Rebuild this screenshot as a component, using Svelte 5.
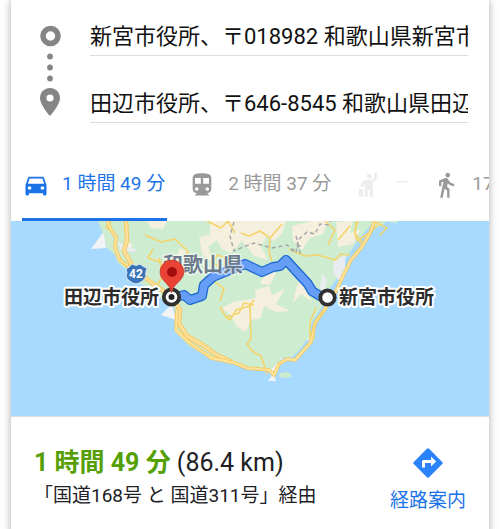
<script>
  let origin = $state('新宮市役所、〒018982 和歌山県新宮市春日');
  let destination = $state('田辺市役所、〒646-8545 和歌山県田辺市新屋敷町');
  let selected = $state('car');

  const modes = [
    { id: 'car', name: '車', time: '1 時間 49 分' },
    { id: 'train', name: '公共交通機関', time: '2 時間 37 分' },
    { id: 'ride', name: '配車サービス', time: '—', off: true },
    { id: 'walk', name: '徒歩', time: '17 時間' }
  ];

  const route =
    'M176 297L184 295 190 300 202 296 204 285 213 277 230 270 245 264 262 272 273 267 280 266 286 260 308 284 312 291 320 296';
</script>

<main class="card">
  <form class="places">
    <svg class="trail" viewBox="0 0 24 96" width="24" height="96" aria-hidden="true">
      <circle cx="12.5" cy="12" r="7.5" fill="none" stroke="#858585" stroke-width="5.6" />
      <g fill="#858585">
        <circle cx="12" cy="32.5" r="2.9" />
        <circle cx="12" cy="43.5" r="2.9" />
        <circle cx="12" cy="54.5" r="2.9" />
        <path fill-rule="evenodd" d="M12 64C6.300 64 2 68.300 2 74c0 7 10 18 10 18s10-11 10-18c0-5.700-4.300-10-10-10zm0 6.400a3.600 3.600 0 1 1 0 7.200 3.600 3.600 0 0 1 0-7.200z" />
      </g>
    </svg>
    <div class="fields">
      <input type="text" aria-label="出発地" bind:value={origin} />
      <input type="text" aria-label="目的地" bind:value={destination} />
    </div>
  </form>

  <nav class="modes" aria-label="移動手段">
    {#each modes as mode}
      <button
        type="button"
        class="mode"
        class:active={selected === mode.id}
        class:off={mode.off}
        disabled={mode.off}
        aria-label={`${mode.name} ${mode.time}`}
        onclick={() => (selected = mode.id)}
      >
        <svg viewBox="0 0 24 24" width="28" height="28" fill="currentColor" aria-hidden="true">
          {#if mode.id === 'car'}
            <path d="M18.920 6.010C18.720 5.420 18.160 5 17.500 5h-11c-.66 0-1.210.42-1.420 1.010L3 12v8c0 .55.45 1 1 1h1c.55 0 1-.45 1-1v-1h12v1c0 .55.45 1 1 1h1c.55 0 1-.45 1-1v-8l-2.080-5.990zM6.500 16c-.83 0-1.500-.67-1.500-1.500S5.670 13 6.500 13s1.500.67 1.500 1.500S7.330 16 6.500 16zm11 0c-.83 0-1.500-.67-1.500-1.500s.67-1.500 1.500-1.500 1.500.67 1.500 1.500-.67 1.500-1.500 1.500zM5 11l1.500-4.500h11L19 11H5z" />
          {:else if mode.id === 'train'}
            <path d="M12 2c-4.420 0-8 .5-8 4v9.500C4 17.430 5.570 19 7.500 19L6 20.500v.5h12v-.5L16.500 19c1.930 0 3.500-1.570 3.500-3.500V6c0-3.500-3.580-4-8-4zM7.500 17c-.83 0-1.500-.67-1.500-1.500S6.670 14 7.500 14s1.500.67 1.500 1.500S8.330 17 7.500 17zm3.500-6H6V6h5v5zm5.500 6c-.83 0-1.500-.67-1.500-1.500s.67-1.500 1.500-1.500 1.500.67 1.500 1.500-.67 1.500-1.500 1.500zm1.500-6h-5V6h5v5z" />
          {:else if mode.id === 'ride'}
            <circle cx="13" cy="4.500" r="2.100" />
            <path d="M17.500 1.800h2.100v3.400c0 2.300-1.500 3.500-3.400 4V22h-2.600v-6h-1.700v6H9.200V11.200c-.9.500-1.300 1.200-1.300 2.300H5.800c0-3.200 2.400-5.900 6-5.900h2.500c2 0 3.200-.9 3.200-2.600zM4.200 15.500h3.600V22H4.200z" />
          {:else}
            <path d="M13.500 5.500c1.100 0 2-.9 2-2s-.9-2-2-2-2 .9-2 2 .9 2 2 2zM9.800 8.900L7 23h2.100l1.800-8 2.100 2v6h2v-7.500l-2.100-2 .6-3C14.800 12 16.800 13 19 13v-2c-1.900 0-3.500-1-4.300-2.400l-1-1.600c-.4-.6-1-1-1.700-1-.3 0-.5.1-.8.1L6 8.300V13h2V9.600l1.800-.7" />
          {/if}
        </svg>
        <span>{mode.time}</span>
      </button>
    {/each}
  </nav>

  <svg class="map" viewBox="11 221 478 195" role="img" aria-label="田辺市役所から新宮市役所までの地図">
    <path fill="#a8daff" d="M11 221h478v195H11z" />
    <path fill="#f1f3f4" d="M104 231L91 249l15-1zM172 304l-11 11 15 5zM268 381h8l-2-8zM302 338l9-1v4z" />
    <path fill="#ceecd0" d="M98 221l3 8 3 6 2 12 9 8 2 7 10 8v11l15 3 9 6 12 10 11 7 2 10-1 15 14 14 17 10 24 7 20 5 18 2 4 5 5-9 5-8 10-1 10-10 5-8 6-1v-6l-4-1 4-11 9-13 4-9 4-10 8-11 8-19 8-12 10-13 7-8 9 2 9-8-5-8z" />
    <path fill="#ceecd0" d="M280 373l8-1 4 4-5 2-8-1zM388 221h9v2l-8-1z" />
    <g fill="#f5efdd">
      <path d="M210 221h76l-4 13-8 7-7-5-6 11 7 13-14-4-12-15-11 12-9-4-5-9-8 6-8-10 9-1z" />
      <path d="M292 226l20-5h16l-5 13-13 4-8 12-9-9zM336 222l17-1-3 12 11-4-8 15-15 3zM147 221h20l-4 8-12-1zM199 235l9 10 4 17-10-8zM233 302l23-4-1-8 14-4 3 9 13-6-9 15 14 7-14 1-12-6-3 12-10 2-5 12-9-5-6-11-9-8zM260 284l7-14 9 3-6 12zM302 275l12 8-10 5 8 14-11-8-8 9 3-14zM124 240l8 4-1 8-5-5zM180 248l7 4-11 5z" />
    </g>
    <g fill="#e9edf0">
      <path d="M117 242l9 4 12 4-5 2-11-1zM334 261l11-6v14l-6 12-6-9zM322 274l5 5-3 18-4-10z" />
      <path fill="#f1f3f4" d="M271 370l6-7 2 2-5 10zM280 357l5 4-3 2z" />
    </g>
    <g fill="none" stroke="#f5d46b" stroke-width="1.6" stroke-linejoin="round">
      <path d="M111 221l-5 6 11 10-2 12 9 16 10 7M145 235l16 7 14-3 13 12-4 8M153 249l-5 9 12 4 13-2M159 258l4 17-5 9M207 221l14 7 7-7 7 12M220 267l-7-4 4-8 10 3M186 274l-8-7 3-9M241 233l8 3 11-5 10 7 12-14M270 238l-1 14 3 9M289 249l16 7 13-1 17 5 6-6 9 1M325 221l10 9-7 15M356 222l-1 12 7 8M350 226l-12 14M220 307l6 10 4 3 6-10 14-4 4-6M250 306l1 33-4 5 5 7 9 5 6 18M214 281l10 8-4 12M227 317l12-4 5-10 10 2M191 305l11-8M360 239l12-8 8-8" />
    </g>
    <g fill="none" stroke-linecap="round" stroke-linejoin="round">
      <path stroke="#f2c75c" stroke-width="4.5" d="M126 221l1 19-3 11 9 16 15 13 24 17 8 13-1 13 8 13 16 9 12 9 15 7" />
      <path stroke="#ffe09a" stroke-width="2.7" d="M126 221l1 19-3 11 9 16 15 13 24 17 8 13-1 13 8 13 16 9 12 9 15 7" />
      <path stroke="#f2c75c" stroke-width="3.6" d="M108 221l2 7 6 9-1 11 5 12 11 8M177 310l-1 20 15 14 12 8 8 6 24 5 12 5 22 2 5 5 5-11 8-5 8 1 8-9 8-9 4-19 10-14 10-16 8-17 8-16 10-12 8-13 5-12" />
      <path stroke="#ffe59e" stroke-width="1.9" d="M108 221l2 7 6 9-1 11 5 12 11 8M177 310l-1 20 15 14 12 8 8 6 24 5 12 5 22 2 5 5 5-11 8-5 8 1 8-9 8-9 4-19 10-14 10-16 8-17 8-16 10-12 8-13 5-12" />
      <path stroke="#f5d46b" stroke-width="1.5" d="M316 308l-6 14v20M324 309l-10 18v12M358 221l-3 8 1 10 6 5M374 221l13 7-7 7" />
    </g>
    <path fill="none" stroke="#a1a5aa" stroke-width="1.4" stroke-dasharray="4 3" d="M234 222l-4 14 4 15 9-4 11-4 18 5 15-3 9 8 2-13 9-8 8 2 5-10 8 1 6-9M296 236l5 20M291 251l12-7" />
    <g fill="none" stroke-linecap="round" stroke-linejoin="round">
      <path stroke="#1967d2" stroke-width="10" d={route} />
      <path stroke="#669df6" stroke-width="7.5" d={route} />
    </g>
    <text class="region" x="163" y="272">和歌山県</text>
    <path fill="#3a73b7" stroke="#d5e5f3" d="M126 269q4-2 6-5 4 3 8 0 3 3 7 4-2 5-1 8-2 6-10 8-8-2-10-8 2-3 0-7z" />
    <text class="shield" x="136" y="278">42</text>
    <circle cx="171.5" cy="297" r="7.7" fill="#fff" stroke="#303030" stroke-width="3.8" />
    <circle cx="171.5" cy="297" r="3" fill="#222" />
    <path fill="#ea4335" stroke="#c5362b" stroke-width=".7" d="M171.500 293c-.8-9-11.500-12-11.500-21a11.900 11.900 0 0 1 23.800 0c0 9-11.500 12-12.300 21z" />
    <circle cx="172" cy="272" r="5" fill="#a50e0e" />
    <circle cx="327.5" cy="297.5" r="7.2" fill="#fff" stroke="#303030" stroke-width="3.8" />
    <text class="place" x="159" y="304" text-anchor="end">田辺市役所</text>
    <text class="place" x="339" y="304">新宮市役所</text>
  </svg>

  <section class="result">
    <div class="summary">
      <p class="duration"><strong>1 時間 49 分</strong> (86.4 km)</p>
      <p class="via">「国道168号 と 国道311号」経由</p>
    </div>
    <a class="directions" href="#directions">
      <svg viewBox="0 0 30 30" width="30" height="30" aria-hidden="true">
        <path fill="#2b83fb" d="M13.900.8q1.100-1.100 2.200 0l13.100 13.100q1.100 1.100 0 2.200L16.100 29.200q-1.100 1.100-2.200 0L.8 16.100q-1.100-1.100 0-2.200z" />
        <path fill="#fff" d="M9 19.500v-6q0-1.500 1.500-1.500H18V8.500l5.200 5-5.200 5V15h-6v4.500z" />
      </svg>
      <span>経路案内</span>
    </a>
  </section>
</main>

<style>
  :global(body) {
    margin: 0;
    background: #fff;
    overflow: hidden;
  }

  .card {
    box-sizing: border-box;
    min-height: 100vh;
    margin: 0 11px;
    background: #fff;
    box-shadow: 0 0 8px rgba(0, 0, 0, 0.34);
    font-family: Roboto, 'Noto Sans CJK JP', sans-serif;
    color: #202124;
  }

  .places {
    display: flex;
    gap: 28px;
    padding: 16px 21px 0 27px;
  }

  .trail {
    flex: none;
    margin-top: 8px;
  }

  .fields {
    display: flex;
    flex: 1;
    flex-direction: column;
    gap: 27px;
    min-width: 0;
  }

  input {
    box-sizing: border-box;
    width: 100%;
    height: 40px;
    padding: 0 0 4px;
    border: 0;
    border-bottom: 1px solid #dcdcdc;
    border-radius: 0;
    outline: 0;
    background: none;
    color: #111;
    font: inherit;
    font-size: 22px;
  }

  .modes {
    display: flex;
    gap: 21px;
    margin-top: 25px;
    padding-left: 11px;
    overflow: hidden;
  }

  .mode {
    display: flex;
    flex: none;
    align-items: center;
    gap: 12px;
    height: 73px;
    padding: 3px 2px 0 0;
    border: 0;
    border-bottom: 3px solid transparent;
    background: none;
    color: #999;
    font: inherit;
    font-size: 19px;
    white-space: nowrap;
    cursor: pointer;
  }

  .mode span {
    padding-bottom: 6px;
  }

  .mode.active {
    border-color: #1a73e8;
    color: #1a73e8;
  }

  .mode.off {
    color: #ededed;
    cursor: default;
  }

  .map {
    display: block;
    width: 100%;
    height: auto;
    border-bottom: 1px solid #dadce0;
  }

  .map text {
    paint-order: stroke;
    stroke-linejoin: round;
    font-weight: 700;
  }

  .region {
    fill: #6c7a8c;
    stroke: rgba(255, 255, 255, 0.6);
    stroke-width: 3px;
    font-size: 20px;
  }

  .place {
    fill: #2c2c2c;
    stroke: #fff;
    stroke-width: 4px;
    font-size: 19px;
  }

  .shield {
    fill: #fff;
    font-size: 12px;
    text-anchor: middle;
  }

  .result {
    display: flex;
    justify-content: space-between;
    padding: 28px 23px 20px;
  }

  p {
    margin: 0;
    white-space: nowrap;
  }

  .duration {
    font-size: 25px;
    line-height: 36px;
  }

  .duration strong {
    color: #559f05;
    font-weight: 700;
  }

  .via {
    font-size: 19px;
    line-height: 30px;
  }

  .directions {
    display: flex;
    flex-direction: column;
    align-items: center;
    gap: 9px;
    padding-top: 3px;
    color: #1a73e8;
    font-size: 19px;
    line-height: 28px;
    text-decoration: none;
  }
</style>
